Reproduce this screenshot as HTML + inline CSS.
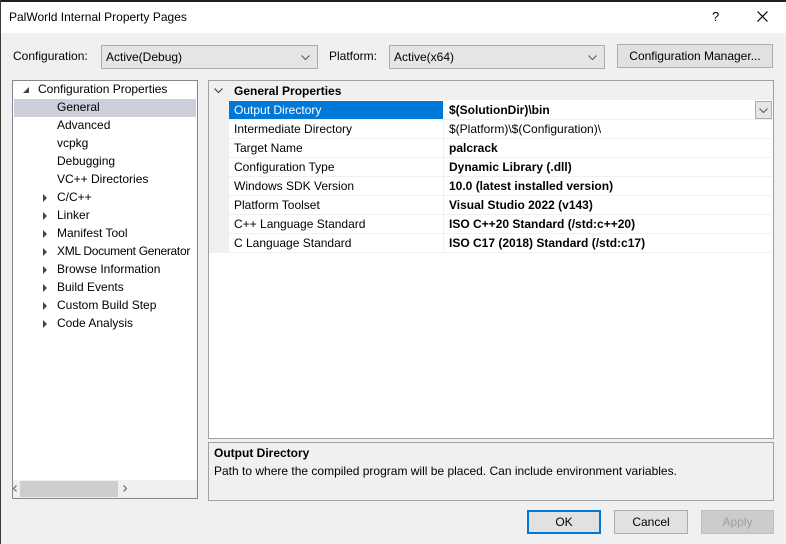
<!DOCTYPE html>
<html><head><style>
*{box-sizing:border-box;margin:0;padding:0}
body{width:786px;height:544px;overflow:hidden;background:#f0f0f0;font-family:"Liberation Sans",sans-serif;font-size:12px;color:#000;position:relative}
.a{position:absolute;white-space:nowrap}
.combo{position:absolute;background:#e5e5e5;border:1px solid #acacac;height:24px;line-height:22px;padding-left:4px}
.btn{position:absolute;background:#e1e1e1;border:1px solid #adadad;height:24px;line-height:22px;text-align:center}
.row{position:absolute;left:229px;width:543px;height:19px;border-bottom:1px solid #f0f0f0;line-height:18px}
.row .k{position:absolute;left:5px}
.row .v{position:absolute;left:220px;font-weight:bold}
.row .sep{position:absolute;left:214px;top:0;width:1px;height:19px;background:#f0f0f0}
.t{position:absolute;line-height:18px;height:18px;white-space:nowrap}
.tri{position:absolute;width:0;height:0;border-top:4px solid transparent;border-bottom:4px solid transparent;border-left:4px solid #444}
svg{position:absolute}
</style></head><body>
<div class="a" style="left:0;top:0;width:786px;height:2px;background:#1f1f1f"></div>
<div class="a" style="left:0;top:0;width:1px;height:544px;background:#3a3a3a"></div>
<div class="a" style="left:1px;top:2px;width:785px;height:31px;background:#fff"></div>
<div class="a" style="left:9px;top:10px;font-size:12px">PalWorld Internal Property Pages</div>
<div class="a" style="left:712px;top:9px;font-size:13px">?</div>
<svg style="left:757px;top:11px" width="11" height="11"><path d="M0.5 0.5L10.5 10.5M10.5 0.5L0.5 10.5" stroke="#000" stroke-width="1.2"/></svg>

<div class="a" style="left:13px;top:49px">Configuration:</div>
<div class="combo" style="left:101px;top:45px;width:217px">Active(Debug)<svg style="right:7px;top:9px" width="9" height="5"><path d="M0.5 0.5L4.5 4.5L8.5 0.5" stroke="#555" fill="none"/></svg></div>
<div class="a" style="left:329px;top:49px">Platform:</div>
<div class="combo" style="left:389px;top:45px;width:216px">Active(x64)<svg style="right:7px;top:9px" width="9" height="5"><path d="M0.5 0.5L4.5 4.5L8.5 0.5" stroke="#555" fill="none"/></svg></div>
<div class="btn" style="left:617px;top:44px;width:156px">Configuration Manager...</div>

<!-- tree -->
<div class="a" style="left:12px;top:80px;width:186px;height:419px;background:#fff;border:1px solid #828790;overflow:hidden">
<div style="position:absolute;left:10px;top:6px;width:0;height:0;border-left:6px solid transparent;border-bottom:6px solid #444"></div>
<div class="t" style="left:25px;top:-1px">Configuration Properties</div>
<div style="position:absolute;left:1px;top:18px;width:182px;height:18px;background:#cccedb"></div>
<div class="t" style="left:44px;top:17px">General</div>
<div class="t" style="left:44px;top:35px">Advanced</div>
<div class="t" style="left:44px;top:53px">vcpkg</div>
<div class="t" style="left:44px;top:71px">Debugging</div>
<div class="t" style="left:44px;top:89px">VC++ Directories</div>
<div class="tri" style="left:30px;top:113px"></div><div class="t" style="left:44px;top:107px">C/C++</div>
<div class="tri" style="left:30px;top:131px"></div><div class="t" style="left:44px;top:125px">Linker</div>
<div class="tri" style="left:30px;top:149px"></div><div class="t" style="left:44px;top:143px">Manifest Tool</div>
<div class="tri" style="left:30px;top:167px"></div><div class="t" style="left:44px;top:161px;letter-spacing:-0.3px">XML Document Generator</div>
<div class="tri" style="left:30px;top:185px"></div><div class="t" style="left:44px;top:179px">Browse Information</div>
<div class="tri" style="left:30px;top:203px"></div><div class="t" style="left:44px;top:197px">Build Events</div>
<div class="tri" style="left:30px;top:221px"></div><div class="t" style="left:44px;top:215px">Custom Build Step</div>
<div class="tri" style="left:30px;top:239px"></div><div class="t" style="left:44px;top:233px">Code Analysis</div>
</div>
<div class="a" style="left:13px;top:480px;width:184px;height:18px;background:#f0f0f0"></div>
<div class="a" style="left:20px;top:481px;width:98px;height:16px;background:#cdcdcd"></div>
<svg style="left:13px;top:485px" width="4" height="7"><path d="M3.5 0.5L0.5 3.5L3.5 6.5" stroke="#606060" fill="none"/></svg>
<svg style="left:123px;top:485px" width="4" height="7"><path d="M0.5 0.5L3.5 3.5L0.5 6.5" stroke="#606060" fill="none"/></svg>

<!-- grid -->
<div class="a" style="left:208px;top:80px;width:566px;height:359px;background:#fff;border:1px solid #a0a0a0"></div>
<div class="a" style="left:209px;top:81px;width:20px;height:172px;background:#f0f0f0"></div>
<div class="a" style="left:209px;top:81px;width:564px;height:19px;background:#f0f0f0"></div>
<svg style="left:214px;top:88px" width="9" height="5"><path d="M0.5 0.5L4.5 4.5L8.5 0.5" stroke="#444" stroke-width="1.2" fill="none"/></svg>
<div class="a" style="left:234px;top:84px;font-weight:bold">General Properties</div>
<div class="row" style="top:101px"><div class="a" style="left:0;top:0;width:214px;height:18px;background:#0078d7"></div><span class="k" style="color:#fff">Output Directory</span><span class="v">$(SolutionDir)\bin</span><div class="a" style="left:526px;top:0;width:17px;height:18px;background:#e5e5e5;border:1px solid #acacac"><svg style="left:3px;top:6px" width="9" height="5"><path d="M0.5 0.5L4.5 4.5L8.5 0.5" stroke="#555" fill="none"/></svg></div></div>
<div class="row" style="top:120px"><div class="sep"></div><span class="k">Intermediate Directory</span><span class="v" style="font-weight:normal">$(Platform)\$(Configuration)\</span></div>
<div class="row" style="top:139px"><div class="sep"></div><span class="k">Target Name</span><span class="v">palcrack</span></div>
<div class="row" style="top:158px"><div class="sep"></div><span class="k">Configuration Type</span><span class="v">Dynamic Library (.dll)</span></div>
<div class="row" style="top:177px"><div class="sep"></div><span class="k">Windows SDK Version</span><span class="v">10.0 (latest installed version)</span></div>
<div class="row" style="top:196px"><div class="sep"></div><span class="k">Platform Toolset</span><span class="v">Visual Studio 2022 (v143)</span></div>
<div class="row" style="top:215px"><div class="sep"></div><span class="k">C++ Language Standard</span><span class="v">ISO C++20 Standard (/std:c++20)</span></div>
<div class="row" style="top:234px"><div class="sep"></div><span class="k">C Language Standard</span><span class="v">ISO C17 (2018) Standard (/std:c17)</span></div>

<!-- description -->
<div class="a" style="left:208px;top:442px;width:566px;height:59px;border:1px solid #a0a0a0;background:#f0f0f0"></div>
<div class="a" style="left:214px;top:446px;font-weight:bold">Output Directory</div>
<div class="a" style="left:214px;top:464px">Path to where the compiled program will be placed. Can include environment variables.</div>

<div class="btn" style="left:527px;top:510px;width:74px;border:2px solid #0078d7;line-height:20px">OK</div>
<div class="btn" style="left:614px;top:510px;width:74px">Cancel</div>
<div class="btn" style="left:701px;top:510px;width:73px;background:#cccccc;border-color:#bfbfbf;color:#a0a0a0">Apply</div>
</body></html>
